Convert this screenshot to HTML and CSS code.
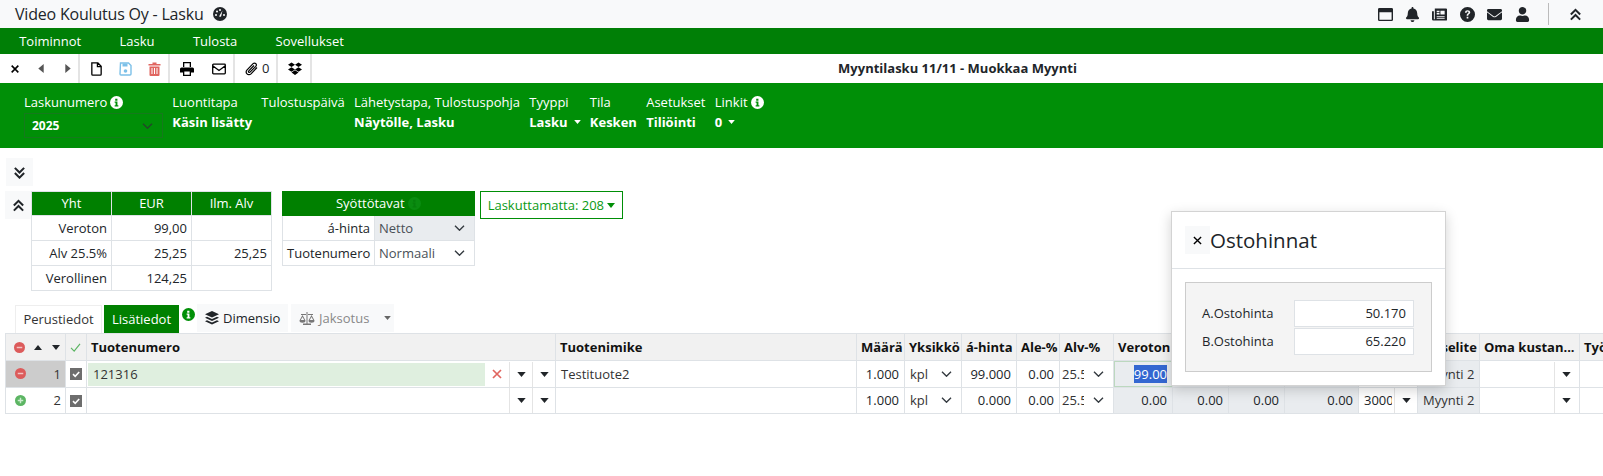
FILE: index.html
```html
<!DOCTYPE html>
<html lang="fi">
<head>
    <meta charset="UTF-8">
    <title>Video Koulutus Oy - Lasku</title>
    <link rel="stylesheet" href="styles.css">
</head>
<body>
    <svg class="sprites" width="0" height="0">
        <symbol id="caret-down" viewBox="0 0 10 6"><path d="M0 0h10L5 6z"/></symbol>
        <symbol id="caret-up" viewBox="0 0 10 6"><path d="M0 6h10L5 0z"/></symbol>
        <symbol id="chevron" viewBox="0 0 14 8"><path d="M1 1l6 6 6-6" fill="none" stroke="currentColor" stroke-width="1.8"/></symbol>
        <symbol id="info" viewBox="0 0 14 14"><circle cx="7" cy="7" r="7"/><path class="info-i" d="M5.6 3h2.4v2H5.6zM5 6h3v4h1v1.2H5V10h1V7.2H5z"/></symbol>
        <symbol id="double-up" viewBox="0 0 14 14"><path d="M2 7l5-5 5 5M2 12.500l5-5 5 5" fill="none" stroke="currentColor" stroke-width="2.200"/></symbol>
        <symbol id="double-down" viewBox="0 0 14 14"><path d="M2 2l5 5 5-5M2 7.500l5 5 5-5" fill="none" stroke="currentColor" stroke-width="2.200"/></symbol>
        <symbol id="minus-circle" viewBox="0 0 12 12"><circle cx="6" cy="6" r="6" fill="#dc5b5b"/><path d="M3 5.200h6v1.600H3z" fill="#f3c4c4"/></symbol>
        <symbol id="plus-circle" viewBox="0 0 12 12"><circle cx="6" cy="6" r="6" fill="#5cb563"/><path d="M3 5.200h6v1.600H3zM5.200 3h1.600v6H5.200z" fill="#cbeccd"/></symbol>
        <symbol id="check-box" viewBox="0 0 12 12"><rect width="12" height="12" fill="#6d6d6d"/><path d="M3 6.200l2.200 2.100L9.200 4" fill="none" stroke="#fff" stroke-width="1.600"/></symbol>
        <symbol id="envelope" viewBox="0 0 512 512"><path d="M502.3 190.8c3.9-3.1 9.7-.2 9.7 4.7V400c0 26.5-21.5 48-48 48H48c-26.5 0-48-21.500-48-48V195.600c0-5 5.700-7.800 9.700-4.700 22.400 17.400 52.100 39.500 154.100 113.600 21.100 15.400 56.700 47.800 92.200 47.600 35.700.3 72-32.800 92.300-47.600 102-74.100 131.600-96.300 154-113.700zM256 320c23.200.4 56.600-29.200 73.400-41.400 132.700-96.300 142.800-104.700 173.400-128.700 5.800-4.500 9.200-11.500 9.200-18.900v-19c0-26.500-21.500-48-48-48H48C21.500 64 0 85.500 0 112v19c0 7.400 3.400 14.300 9.200 18.900 30.600 23.900 40.700 32.400 173.400 128.700 16.800 12.200 50.200 41.800 73.400 41.400z"/></symbol>
    </svg>

    <div class="topbar">
        <div class="app-title">
            <span>Video Koulutus Oy - Lasku</span>
            <svg class="gauge" viewBox="0 0 14 14"><circle cx="7" cy="7" r="7" fill="#212529"/><path d="M6 9.500L9.500 3.500 8 9.800z" fill="#fff"/><circle cx="3" cy="8" r="1" fill="#fff"/><circle cx="4" cy="4.500" r="1" fill="#fff"/><circle cx="7" cy="3" r="1" fill="#fff"/><circle cx="11" cy="8" r="1" fill="#fff"/></svg>
        </div>
        <div class="top-icons">
            <svg class="top-icon" viewBox="0 0 16 14"><path fill-rule="evenodd" d="M1.500 0h13A1.500 1.500 0 0 1 16 1.500v11a1.500 1.500 0 0 1-1.500 1.500h-13A1.500 1.500 0 0 1 0 12.500v-11A1.500 1.500 0 0 1 1.500 0zM1.500 4.500v8h13v-8z"/></svg>
            <svg class="top-icon" viewBox="0 0 448 512"><path d="M224 512c35.320 0 63.970-28.650 63.970-64H160.030c0 35.350 28.650 64 63.970 64zm215.390-149.710c-19.320-20.760-55.470-51.990-55.470-154.290 0-77.700-54.480-139.900-127.940-155.160V32c0-17.670-14.320-32-31.980-32s-31.980 14.330-31.980 32v20.840C118.560 68.100 64.080 130.300 64.080 208c0 102.300-36.150 133.530-55.470 154.290-6 6.450-8.660 14.160-8.610 21.710.11 16.400 12.980 32 32.100 32h383.800c19.120 0 32-15.600 32.100-32 .05-7.550-2.610-15.270-8.610-21.710z"/></svg>
            <svg class="top-icon" viewBox="0 0 16 13"><path fill-rule="evenodd" d="M3 0h12a1 1 0 0 1 1 1v11a1 1 0 0 1-1 1H1.500A1.500 1.500 0 0 1 0 11.500V3h2v8.500h1zM9 2.500v4h4.500v-4zM5 2.500v1.500h3V2.500zM5 5v1.500h3V5zM5 8v1h8.500V8zM5 10v1h8.500v-1z"/></svg>
            <svg class="top-icon" viewBox="0 0 16 16"><path fill-rule="evenodd" d="M8 0a8 8 0 1 1 0 16A8 8 0 0 1 8 0zM5.300 6h1.800c0-.7.400-1.100 1-1.100s1 .3 1 .9c0 .5-.3.8-.9 1.200-.7.500-1.100 1-1.100 1.900v.3h1.700v-.2c0-.5.200-.8.800-1.200.8-.5 1.300-1.100 1.300-2.100 0-1.500-1.200-2.300-2.800-2.300S5.300 4.300 5.300 6zM7.100 10.500v1.700h1.800v-1.700z"/></svg>
            <svg class="top-icon" viewBox="0 0 512 512"><use href="#envelope"/></svg>
            <svg class="top-icon" viewBox="0 0 448 512"><path d="M224 256c70.700 0 128-57.300 128-128S294.700 0 224 0 96 57.300 96 128s57.300 128 128 128zm89.600 32h-16.700c-22.200 10.200-46.900 16-72.900 16s-50.600-5.800-72.900-16h-16.700C60.200 288 0 348.200 0 422.400V464c0 26.500 21.500 48 48 48h352c26.500 0 48-21.500 48-48v-41.600c0-74.200-60.200-134.400-134.400-134.400z"/></svg>
            <span class="top-divider"></span>
            <svg class="top-collapse"><use href="#double-up"/></svg>
        </div>
    </div>

    <nav class="mainnav">
        <a class="nav-item">Toiminnot</a>
        <a class="nav-item">Lasku</a>
        <a class="nav-item">Tulosta</a>
        <a class="nav-item">Sovellukset</a>
    </nav>

    <div class="toolbar">
        <div class="tool-group group-nav">
            <svg class="tool-icon" viewBox="0 0 12 12"><path d="M2 2l8 8M10 2l-8 8" stroke="#000" stroke-width="1.900" fill="none"/></svg>
            <svg class="tool-caret" viewBox="0 0 6 10"><path d="M6 0v10L0 5z"/></svg>
            <svg class="tool-caret" viewBox="0 0 6 10"><path d="M0 0v10l6-5z"/></svg>
        </div>
        <div class="tool-group group-file">
            <svg class="tool-icon tall" viewBox="0 0 12 15"><path d="M1 1h6.500L11 4.500V13a1 1 0 0 1-1 1H2a1 1 0 0 1-1-1z M7 1v4h4" fill="none" stroke="#000" stroke-width="1.400"/></svg>
            <svg class="tool-icon tall" viewBox="0 0 13 14"><path d="M1.500 1h8L12 3.500V12a1 1 0 0 1-1 1H2a1 1 0 0 1-1-1z" fill="none" stroke="#7cc0e8" stroke-width="1.400"/><path d="M3.500 1.500h5v3h-5z" fill="#7cc0e8"/><circle cx="6.500" cy="9" r="1.800" fill="#7cc0e8"/></svg>
            <svg class="tool-icon tall" viewBox="0 0 12 14"><path d="M0 2h4V.5h4V2h4v1.500H0zM1 4.500h10V13a1 1 0 0 1-1 1H2a1 1 0 0 1-1-1zM3 6v6h1V6zM5.500 6v6h1V6zM8 6v6h1V6z" fill="#e0655f" fill-rule="evenodd"/></svg>
        </div>
        <div class="tool-group group-send">
            <svg class="tool-icon wide" viewBox="0 0 14 14"><path fill-rule="evenodd" d="M3 0h8v5H9.700V1.300H4.300V5H3zM1.500 5.500h11A1.500 1.500 0 0 1 14 7v3.500h-3V14H3v-3.500H0V7a1.500 1.500 0 0 1 1.500-1.500zM4.300 9.500v3.200h5.400V9.500z"/></svg>
            <svg class="tool-icon wide" viewBox="0 0 14 11"><path d="M1.500.7h11a.8.8 0 0 1 .8.8v8a.8.8 0 0 1-.8.8h-11a.8.8 0 0 1-.8-.8v-8a.8.8 0 0 1 .8-.8z M1 2.500l6 4.500 6-4.500" fill="none" stroke="#000" stroke-width="1.300"/></svg>
        </div>
        <div class="tool-group group-attach">
            <svg class="tool-icon wide" viewBox="0 0 14 14"><path d="M12 5.500L6 11.800c-1.200 1.200-3 1.200-4 .1s-1-2.800.1-4l6-6.200c.8-.8 2-.8 2.700 0s.7 1.900 0 2.700L5 10.200c-.4.400-1 .4-1.300 0s-.3-1 .1-1.300L9 3.500" fill="none" stroke="#000" stroke-width="1.200"/></svg>
            <span>0</span>
        </div>
        <div class="tool-group group-box">
            <svg class="tool-icon wide" viewBox="0 0 14 13"><path d="M3.500 0L7 2.300 3.500 4.600 0 2.300zM10.500 0L14 2.300l-3.500 2.300L7 2.300zM0 7l3.500-2.300L7 7 3.500 9.300zM14 7l-3.500-2.300L7 7l3.500 2.300zM3.500 10L7 7.800l3.500 2.200L7 12.400z"/></svg>
        </div>
        <div class="toolbar-title">Myyntilasku 11/11 - Muokkaa Myynti</div>
    </div>

    <div class="invoice-head">
        <div class="head-field field-number">
            <div class="head-label">Laskunumero <svg class="info-icon"><use href="#info"/></svg></div>
            <div class="head-select"><span>2025</span><svg class="chevron"><use href="#chevron"/></svg></div>
        </div>
        <div class="head-field">
            <div class="head-label">Luontitapa</div>
            <div class="head-value">Käsin lisätty</div>
        </div>
        <div class="head-field">
            <div class="head-label">Tulostuspäivä</div>
        </div>
        <div class="head-field">
            <div class="head-label">Lähetystapa, Tulostuspohja</div>
            <div class="head-value">Näytölle, Lasku</div>
        </div>
        <div class="head-field">
            <div class="head-label">Tyyppi</div>
            <div class="head-value">Lasku <svg class="head-caret"><use href="#caret-down"/></svg></div>
        </div>
        <div class="head-field">
            <div class="head-label">Tila</div>
            <div class="head-value">Kesken</div>
        </div>
        <div class="head-field">
            <div class="head-label">Asetukset</div>
            <div class="head-value">Tiliöinti</div>
        </div>
        <div class="head-field">
            <div class="head-label">Linkit <svg class="info-icon"><use href="#info"/></svg></div>
            <div class="head-value">0 <svg class="head-caret"><use href="#caret-down"/></svg></div>
        </div>
    </div>

    <div class="content">
        <button class="fold-btn fold-down"><svg><use href="#double-down"/></svg></button>

        <div class="summary-row">
            <button class="fold-btn"><svg><use href="#double-up"/></svg></button>
            <table class="mini-table totals">
                <tr><th>Yht</th><th>EUR</th><th>Ilm. Alv</th></tr>
                <tr><td>Veroton</td><td>99,00</td><td></td></tr>
                <tr><td>Alv 25.5%</td><td>25,25</td><td>25,25</td></tr>
                <tr><td>Verollinen</td><td>124,25</td><td></td></tr>
            </table>
            <table class="mini-table modes">
                <colgroup><col class="modes-label"><col class="modes-value"></colgroup>
                <tr><th colspan="2">Syöttötavat <svg class="info-icon dim"><use href="#info"/></svg></th></tr>
                <tr><td>á-hinta</td><td class="mode-cell disabled"><div class="mode-value">Netto<svg class="chevron"><use href="#chevron"/></svg></div></td></tr>
                <tr><td>Tuotenumero</td><td class="mode-cell"><div class="mode-value">Normaali<svg class="chevron"><use href="#chevron"/></svg></div></td></tr>
            </table>
            <button class="uninvoiced">Laskuttamatta: 208 <svg class="uninvoiced-caret"><use href="#caret-down"/></svg></button>
        </div>

        <div class="tabs">
            <a class="tab tab-plain">Perustiedot</a>
            <a class="tab tab-active">Lisätiedot</a>
            <svg class="tab-info"><use href="#info"/></svg>
            <a class="tab tab-soft">
                <svg class="tab-icon" viewBox="0 0 14 14"><path d="M7 0l7 3.300L7 6.500 0 3.300zM2 5.800l5 2.300 5-2.300 2 1-7 3.200L0 6.800zM2 9.300l5 2.300 5-2.300 2 1L7 13.500 0 10.300z"/></svg>
                Dimensio
            </a>
            <a class="tab tab-soft tab-muted">
                <svg class="tab-icon scale" viewBox="0 0 16 13"><path d="M7.500 0h1v11.500H12V13H4v-1.500h3.500zM2 2h12v1H2zM3.500 3L.5 8.500a3 2.200 0 0 0 6 0zM3.500 5L1.800 8h3.400zM12.500 3l-3 5.500a3 2.200 0 0 0 6 0zM12.500 5l-1.700 3h3.400z" fill-rule="evenodd"/></svg>
                Jaksotus
                <svg class="tab-caret"><use href="#caret-down"/></svg>
            </a>
        </div>

        <div class="rows-wrap">
            <table class="rows">
                <colgroup>
                    <col class="c-ctrl"><col class="c-check"><col class="c-code"><col class="c-name">
                    <col class="c-qty"><col class="c-unit"><col class="c-price"><col class="c-disc">
                    <col class="c-vat"><col class="c-net"><col class="c-x1"><col class="c-x2">
                    <col class="c-x3"><col class="c-acc"><col class="c-desc"><col class="c-own"><col class="c-work">
                </colgroup>
                <tr>
                    <th class="ctrl-head"><div class="ctrl-icons">
                        <svg class="round"><use href="#minus-circle"/></svg>
                        <svg class="sort"><use href="#caret-up"/></svg>
                        <svg class="sort"><use href="#caret-down"/></svg>
                    </div></th>
                    <th class="check-head"><svg class="tick" viewBox="0 0 12 10"><path d="M1 5.500l3.500 3.500L11 1" fill="none" stroke="#5cb563" stroke-width="1.300"/></svg></th>
                    <th>Tuotenumero</th>
                    <th>Tuotenimike</th>
                    <th>Määrä</th>
                    <th>Yksikkö</th>
                    <th>á-hinta</th>
                    <th>Ale-%</th>
                    <th>Alv-%</th>
                    <th>Veroton</th>
                    <th></th>
                    <th></th>
                    <th></th>
                    <th></th>
                    <th>Tiliselite</th>
                    <th>Oma kustan...</th>
                    <th>Työ</th>
                </tr>
                <tr>
                    <td class="ctrl-cell selected"><div class="ctrl-row"><svg class="round"><use href="#minus-circle"/></svg><span>1</span></div></td>
                    <td class="check-cell"><svg class="box"><use href="#check-box"/></svg></td>
                    <td class="code-cell"><div class="code-row">
                        <div class="code-input">121316</div>
                        <svg class="clear" viewBox="0 0 10 10"><path d="M1 1l8 8M9 1L1 9" stroke="#e0655f" stroke-width="1.700"/></svg>
                        <span class="drop"><svg><use href="#caret-down"/></svg></span>
                        <span class="drop"><svg><use href="#caret-down"/></svg></span>
                    </div></td>
                    <td class="text-cell">Testituote2</td>
                    <td class="num">1.000</td>
                    <td><div class="pick">kpl<svg class="chevron"><use href="#chevron"/></svg></div></td>
                    <td class="num">99.000</td>
                    <td class="num">0.00</td>
                    <td><div class="pick narrow"><span class="clip">25.5</span><svg class="chevron"><use href="#chevron"/></svg></div></td>
                    <td class="num calc focused"><span class="selection">99.00</span></td>
                    <td class="num calc"></td>
                    <td class="num calc"></td>
                    <td class="num calc"></td>
                    <td></td>
                    <td class="calc text-cell">Myynti 2</td>
                    <td><div class="own"><span class="drop"><svg><use href="#caret-down"/></svg></span></div></td>
                    <td></td>
                </tr>
                <tr>
                    <td class="ctrl-cell"><div class="ctrl-row"><svg class="round"><use href="#plus-circle"/></svg><span>2</span></div></td>
                    <td class="check-cell"><svg class="box"><use href="#check-box"/></svg></td>
                    <td class="code-cell"><div class="code-row">
                        <div class="code-empty"></div>
                        <span class="drop"><svg><use href="#caret-down"/></svg></span>
                        <span class="drop"><svg><use href="#caret-down"/></svg></span>
                    </div></td>
                    <td></td>
                    <td class="num">1.000</td>
                    <td><div class="pick">kpl<svg class="chevron"><use href="#chevron"/></svg></div></td>
                    <td class="num">0.000</td>
                    <td class="num">0.00</td>
                    <td><div class="pick narrow"><span class="clip">25.5</span><svg class="chevron"><use href="#chevron"/></svg></div></td>
                    <td class="num calc">0.00</td>
                    <td class="num calc">0.00</td>
                    <td class="num calc">0.00</td>
                    <td class="num calc">0.00</td>
                    <td><div class="account"><span class="clip">3000</span><span class="drop"><svg><use href="#caret-down"/></svg></span></div></td>
                    <td class="calc text-cell">Myynti 2</td>
                    <td><div class="own"><span class="drop"><svg><use href="#caret-down"/></svg></span></div></td>
                    <td></td>
                </tr>
            </table>
        </div>
    </div>

    <div class="price-modal">
        <div class="modal-head">
            <button class="modal-close"><svg viewBox="0 0 10 10"><path d="M1 1l8 8M9 1L1 9" stroke="#000" stroke-width="1.500"/></svg></button>
            <h4 class="modal-title">Ostohinnat</h4>
        </div>
        <div class="modal-body">
            <div class="price-box">
                <div class="price-row"><label>A.Ostohinta</label><div class="price-input">50.170</div></div>
                <div class="price-row"><label>B.Ostohinta</label><div class="price-input">65.220</div></div>
            </div>
        </div>
    </div>
</body>
</html>
```

FILE: styles.css
```css
* {
    box-sizing: border-box;
}

html, body {
    margin: 0;
    padding: 0;
    height: 100%;
    overflow: hidden;
}

body {
    font-family: "Open Sans", "Noto Sans", sans-serif;
    font-size: 13px;
    line-height: 1.3;
    color: #212529;
    background: #fff;
    position: relative;
}

.sprites {
    position: absolute;
}

button {
    font-family: inherit;
    font-size: inherit;
}

/* top bar */
.topbar {
    height: 28px;
    background: #f8f9fa;
    display: flex;
    align-items: center;
    justify-content: space-between;
    padding-left: 15px;
    padding-right: 21px;
}

.app-title {
    display: flex;
    align-items: center;
    gap: 9px;
    font-size: 16px;
    letter-spacing: -0.2px;
    color: #212529;
}

.gauge {
    width: 14px;
    height: 14px;
}

.top-icons {
    display: flex;
    align-items: center;
    height: 100%;
}

.top-icon {
    width: 15px;
    height: 15px;
    margin-right: 12.400px;
    fill: #212529;
}

.top-divider {
    width: 1px;
    height: 22px;
    background: #bbb;
    margin-left: 6px;
    margin-right: 20px;
}

.top-collapse {
    width: 13px;
    height: 13px;
    color: #212529;
}

/* main menu */
.mainnav {
    height: 26px;
    background: #007f06;
    display: flex;
    align-items: center;
}

.nav-item {
    color: #fff;
    padding: 0 19.200px;
    font-size: 13px;
}

/* toolbar */
.toolbar {
    height: 29px;
    display: flex;
    align-items: stretch;
    background: #fff;
}

.tool-group {
    display: flex;
    align-items: center;
    border-right: 2px solid #e4e4e4;
    font-size: 13px;
}

.group-nav {
    width: 80px;
    padding-left: 10px;
    gap: 18px;
}

.group-file {
    width: 90px;
    padding-left: 10px;
    gap: 16px;
}

.group-send {
    width: 65px;
    padding-left: 10px;
    gap: 18px;
}

.group-attach {
    width: 43px;
    padding-left: 10px;
    gap: 3px;
}

.group-box {
    width: 34px;
    padding-left: 10px;
}

.tool-icon {
    width: 10px;
    height: 10px;
}

.tool-icon.tall {
    width: 13px;
    height: 14px;
}

.tool-icon.wide {
    width: 14px;
    height: 14px;
}

.tool-caret {
    width: 6px;
    height: 9px;
    fill: #555;
}

.tool-caret + .tool-caret {
    margin-left: 3px;
}

.toolbar-title {
    flex: 1;
    text-align: center;
    align-self: center;
    font-weight: 700;
    font-size: 13px;
    color: #212529;
}

/* invoice head */
.invoice-head {
    height: 65px;
    background: #008f07;
    display: flex;
    gap: 9.300px;
    padding: 9px 0 0 24px;
    color: #fff;
}

.head-label {
    display: flex;
    align-items: center;
    gap: 3px;
    height: 20px;
    font-size: 13px;
    white-space: nowrap;
}

.head-value {
    font-weight: 700;
    font-size: 13px;
    line-height: 20px;
    display: flex;
    align-items: center;
    gap: 4px;
}

.field-number {
    width: 139px;
}

.head-select {
    height: 25px;
    border: 1px solid #157a1c;
    display: flex;
    align-items: center;
    justify-content: space-between;
    padding: 0 9px 0 7px;
    font-weight: 700;
    font-size: 12px;
    margin-top: 1px;
}

.head-select .chevron {
    color: #23472a;
}

.info-icon {
    width: 13px;
    height: 13px;
    fill: #fff;
    --info-glyph: #008f07;
}

.info-i {
    fill: var(--info-glyph, #008f07);
}

.info-icon.dim {
    fill: #0a8c10;
    --info-glyph: #067f0b;
    vertical-align: -2px;
}

.head-caret {
    width: 7px;
    height: 4px;
    fill: #fff;
    margin-left: 2px;
}

.chevron {
    width: 11px;
    height: 6px;
    color: #343a40;
    flex: none;
}

/* content */
.content {
    padding-left: 5px;
}

.fold-btn {
    width: 27px;
    height: 28px;
    padding: 0;
    border: 0;
    background: #f8f9fa;
    display: flex;
    align-items: center;
    justify-content: center;
    flex: none;
}

.fold-btn svg {
    width: 13px;
    height: 13px;
    color: #212529;
}

.fold-down {
    margin: 10px 0 5px 1px;
}

.summary-row {
    display: flex;
    align-items: flex-start;
    height: 99px;
}

.mini-table {
    border-collapse: collapse;
    table-layout: fixed;
    font-size: 13px;
}

.mini-table th {
    background: #008000;
    color: #fff;
    font-weight: 400;
    height: 24px;
    padding: 0;
    border: 1px solid #dee2e6;
    text-align: center;
}

.mini-table td {
    height: 25px;
    padding: 0 4px;
    text-align: right;
    border: 1px solid #dee2e6;
    white-space: nowrap;
}

.totals {
    width: 241px;
    margin-left: -1px;
}

.totals th,
.totals td {
    width: 80px;
}

.modes {
    width: 192px;
    margin-left: 10px;
}

.modes-label {
    width: 92px;
}

.modes-value {
    width: 100px;
}

.modes th {
    border-color: #008000;
}

.mini-table td.mode-cell {
    text-align: left;
    padding: 0 9px 0 4px;
}

.mode-cell.disabled {
    background: #e9ecef;
}

.mode-value {
    display: flex;
    align-items: center;
    justify-content: space-between;
    color: #495057;
}

.uninvoiced {
    margin-left: 5px;
    width: 143px;
    height: 28px;
    border: 1.500px solid #008f07;
    background: #fff;
    color: #0a9a14;
    padding: 0;
    font-size: 13px;
    white-space: nowrap;
}

.uninvoiced-caret {
    width: 8px;
    height: 5px;
    fill: #008f07;
    vertical-align: 2px;
}

/* tabs */
.tabs {
    display: flex;
    align-items: flex-start;
    height: 28px;
    margin-top: 15px;
    margin-left: 10px;
}

.tab {
    height: 28px;
    display: flex;
    align-items: center;
    font-size: 13px;
    white-space: nowrap;
}

.tab-plain {
    width: 87px;
    justify-content: center;
    border: 1px solid #eee;
    border-bottom: 0;
    color: #333;
}

.tab-active {
    width: 75px;
    margin-left: 2px;
    justify-content: center;
    background: #008000;
    color: #fff;
}

.tab-info {
    width: 13px;
    height: 13px;
    fill: #008f07;
    margin: 3px 2px 0 3px;
    --info-glyph: #fff;
}

.tab-soft {
    background: #f8f9fa;
    height: 28px;
    width: 91px;
    padding-left: 8px;
    gap: 4px;
    margin-top: -1px;
    color: #212529;
}

.tab-muted {
    width: 103px;
    margin-left: 3px;
    color: #888;
    padding-left: 8px;
}

.tab-icon {
    width: 14px;
    height: 14px;
    fill: #212529;
}

.tab-icon.scale {
    width: 16px;
    height: 13px;
    fill: #777;
}

.tab-caret {
    width: 7px;
    height: 4px;
    fill: #666;
    margin-left: 11px;
}

/* invoice rows */
.rows-wrap {
    overflow: hidden;
}

.rows {
    border-collapse: collapse;
    table-layout: fixed;
    width: 1635px;
    font-size: 13px;
}

.c-ctrl { width: 60px; }
.c-check { width: 21px; }
.c-code { width: 469px; }
.c-name { width: 301px; }
.c-qty { width: 48px; }
.c-unit { width: 57px; }
.c-price { width: 55px; }
.c-disc { width: 43px; }
.c-vat { width: 54px; }
.c-net { width: 59px; }
.c-x1 { width: 56px; }
.c-x2 { width: 56px; }
.c-x3 { width: 74px; }
.c-acc { width: 59px; }
.c-desc { width: 62px; }
.c-own { width: 100px; }
.c-work { width: 61px; }

.rows th {
    height: 27px;
    background: #f1f1f1;
    border: 1px solid #dee2e6;
    text-align: left;
    padding: 0 3px 0 4px;
    font-weight: 700;
    font-size: 13px;
    color: #111;
    white-space: nowrap;
    overflow: hidden;
}

.rows td {
    height: 26px;
    padding: 0;
    border: 1px solid #dee2e6;
    white-space: nowrap;
}

.rows tr:nth-child(2) td {
    height: 27px;
}

.rows td.num {
    text-align: right;
    padding-right: 5px;
}

.rows td.text-cell {
    padding-left: 5px;
    color: #333;
}

.rows td.calc {
    background: #e9ecef;
}

.rows td.focused {
    background: #e9ecef;
    box-shadow: inset 0 0 0 1px #bcd8bf;
}

.selection {
    background: #3367d1;
    color: #fff;
}

.ctrl-icons {
    display: flex;
    align-items: center;
    padding-left: 4px;
}

.round {
    width: 11px;
    height: 11px;
    flex: none;
}

.sort {
    width: 8px;
    height: 5px;
    fill: #212529;
    margin-left: 9px;
}

.sort:last-child {
    margin-left: 10px;
}

.ctrl-row {
    display: flex;
    align-items: center;
    justify-content: space-between;
    padding: 0 4px 0 9px;
    color: #333;
}

.ctrl-cell.selected {
    background: #ccc;
}

.check-head,
.rows td.check-cell {
    text-align: center;
}

.tick {
    width: 11px;
    height: 9px;
}

.box {
    width: 12px;
    height: 12px;
    display: block;
    margin: 0 auto;
}

.code-row {
    display: flex;
    align-items: stretch;
    height: 25px;
}

.code-input {
    width: 397px;
    margin: 1px 0 1px 1px;
    background: #dfefdf;
    padding-left: 5px;
    line-height: 23px;
    color: #333;
}

.code-empty {
    width: 422px;
}

.clear {
    width: 10px;
    height: 10px;
    margin: 7px 7px 0 7px;
    flex: none;
}

.drop {
    width: 23px;
    display: flex;
    align-items: center;
    justify-content: center;
    border-left: 1px solid #e4e4e4;
    flex: none;
}

.drop svg {
    width: 9px;
    height: 5px;
    fill: #212529;
}

.pick {
    display: flex;
    align-items: center;
    justify-content: space-between;
    padding: 0 9px 0 5px;
    color: #333;
}

.pick.narrow {
    padding-left: 2px;
}

.clip {
    display: block;
    width: 22px;
    overflow: hidden;
}

.account {
    display: flex;
    align-items: stretch;
    height: 25px;
    padding-left: 5px;
    line-height: 25px;
    justify-content: space-between;
}

.account .clip {
    width: 28px;
}

.account .drop {
    width: 23px;
}

.own {
    display: flex;
    justify-content: flex-end;
    height: 25px;
    padding-right: 1px;
}

.own .drop {
    width: 24px;
}

/* Ostohinnat dialog */
.price-modal {
    position: absolute;
    left: 1171px;
    top: 211px;
    width: 275px;
    height: 175px;
    background: #fff;
    border: 1px solid #d3d3d3;
    box-shadow: 0 4px 12px rgba(0, 0, 0, 0.18);
}

.modal-head {
    height: 57px;
    display: flex;
    align-items: center;
    padding-left: 13px;
    border-bottom: 1px solid #dee2e6;
}

.modal-close {
    width: 25px;
    height: 28px;
    padding: 0;
    border: 0;
    background: #f8f9fa;
    display: flex;
    align-items: center;
    justify-content: center;
}

.modal-close svg {
    width: 9px;
    height: 9px;
}

.modal-title {
    margin: 0;
    font-size: 20.500px;
    font-weight: 500;
    color: #212529;
}

.modal-body {
    padding: 13px;
}

.price-box {
    background: #f4f4f4;
    border: 1px solid #ccc;
    height: 90px;
    display: flex;
    flex-direction: column;
    justify-content: center;
    gap: 1px;
    padding-left: 16px;
    padding-right: 17px;
}

.price-row {
    display: flex;
    align-items: center;
    justify-content: space-between;
}

.price-input {
    width: 120px;
    height: 27px;
    background: #fff;
    border: 1px solid #dee2e6;
    text-align: right;
    line-height: 25px;
    padding-right: 7px;
}
```
